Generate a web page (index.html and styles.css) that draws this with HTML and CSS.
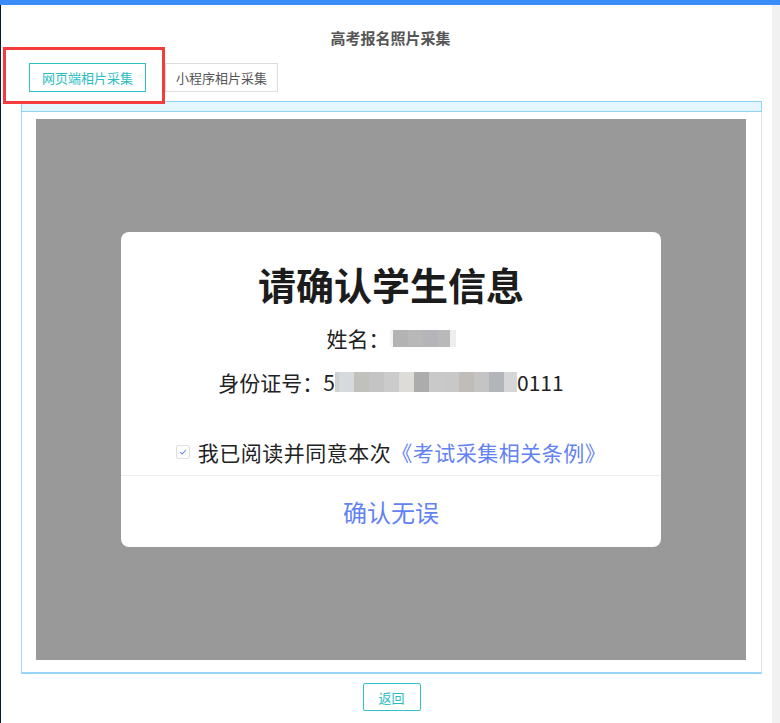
FILE: index.html
```html
<!DOCTYPE html>
<html>
  <head>
    <meta charset="utf-8">
    <title>高考报名照片采集</title>
    <link rel="stylesheet" href="styles.css">
  </head>
  <body>
    <div class="topbar"></div>
    <div class="main">
      <h3 class="title">高考报名照片采集</h3>
      <div class="tabs">
        <span class="tab active">网页端相片采集</span>
        <span class="tab second">小程序相片采集</span>
        <div class="mark"></div>
      </div>
      <div class="panel">
        <div class="panel-head"></div>
        <div class="panel-body">
          <div class="stage">
            <div class="dialog">
              <div class="dialog-title">请确认学生信息</div>
              <div class="line first">姓名：<span class="mosaic name-mosaic"></span></div>
              <div class="line">身份证号：5<span class="mosaic id-mosaic"></span>0111</div>
              <label class="agree">
                <span class="check"><svg width="10" height="10" viewBox="0 0 10 10"><path d="M2.2 5.2 L4.2 7 L7.8 3" fill="none" stroke="#6a84f0" stroke-width="1.1"/></svg></span>我已阅读并同意本次<a class="link">《考试采集相关条例》</a>
              </label>
              <div class="dialog-btn">确认无误</div>
            </div>
          </div>
        </div>
      </div>
      <div class="foot"><button class="back">返回</button></div>
    </div>
  </body>
</html>
```

FILE: styles.css
```css
body { margin: 0; font-family: "Noto Sans CJK SC", "Microsoft YaHei", sans-serif; background: linear-gradient(to right, #fff calc(100% - 8px), #f1f1f1 0); }

.topbar { height: 5px; background: #3a8cf9; }
.main { border-left: 1px solid #0d1b31; height: 718px; box-sizing: border-box; }

.title { margin: 0; padding-top: 22px; font-size: 15px; line-height: 22px; font-weight: bold; color: #555; text-align: center; }

.tabs { position: relative; display: flex; margin-top: 14px; padding-left: 28px; }
.tab { height: 29px; box-sizing: border-box; padding: 0 12px; border: 1px solid #ddd; font-size: 13px; line-height: 27px; color: #555; background: #fff; }
.tab.active { border-color: #2fc1c3; color: #2bbcbf; }
.tab.second { margin-left: 19px; padding: 0 10px; }
/* red highlight drawn over the first tab */
.mark { position: absolute; left: 2px; top: -16px; width: 162px; height: 57px; box-sizing: border-box; border: 3px solid #f53b3b; z-index: 2; }

.panel { margin: 9px 18px 0 20px; }
.panel-head { height: 11px; box-sizing: border-box; border: 1px solid #8fd2fa; background: #e6f6fe; }
.panel-body { padding: 7px 15px 12px 14px; border-left: 1px solid #a9dbfa; border-right: 1px solid #e2e2e2; border-bottom: 2px solid #95d5fb; }
.stage { height: 541px; background: #999; display: flex; align-items: center; justify-content: center; }

.dialog { width: 540px; height: 315px; background: #fff; border-radius: 8px; display: flex; flex-direction: column; text-align: center; color: #222; }
.dialog-title { margin-top: 27px; font-size: 38px; line-height: 50px; font-weight: bold; color: #1c1c1c; }
.line { font-size: 21px; line-height: 30px; margin-top: 14px; display: flex; align-items: center; justify-content: center; }
.mosaic { display: inline-block; height: 17px; }
.name-mosaic { width: 66px; background: linear-gradient(to right, #f4f5f7 0 3px, #b3b3b3 3px 18px, #b8b8b8 18px 33px, #b5b5b9 33px 48px, #b9b9b9 48px 60px, #eee 60px); }
.id-mosaic { width: 182px; height: 20px; background: linear-gradient(to right, #d0d0cf 0 4px, #d6dadd 4px 19px, #c0c0bd 19px 34px, #c4c4c4 34px 49px, #cbcbcb 49px 64px, #dddcd8 64px 79px, #acacac 79px 94px, #c9c9c9 94px 109px, #c8c8c8 109px 124px, #c0bdb9 124px 139px, #c4c4c4 139px 154px, #b2b5b9 154px 169px, #d6d6d6 169px); }

.agree { margin-top: 40px; font-size: 21px; line-height: 30px; letter-spacing: 0.5px; display: flex; align-items: center; justify-content: center; }
.check { width: 14px; height: 14px; box-sizing: border-box; border: 1px solid #dcdfe6; border-radius: 2px; margin-right: 8px; display: flex; align-items: center; justify-content: center; }
.check svg { display: block; }
.link { color: #6282f2; }

.dialog-btn { margin-top: 8px; border-top: 1px solid #eee; flex: 1; display: flex; align-items: center; justify-content: center; font-size: 24px; color: #6282f2; }

.foot { margin-top: 9px; text-align: center; }
.back { height: 28px; width: 58px; padding: 0; border: 1px solid #2fc1c3; border-radius: 2px; background: #fff; color: #2bbcbf; font-family: inherit; font-size: 13px; margin-left: 2px; }
```
